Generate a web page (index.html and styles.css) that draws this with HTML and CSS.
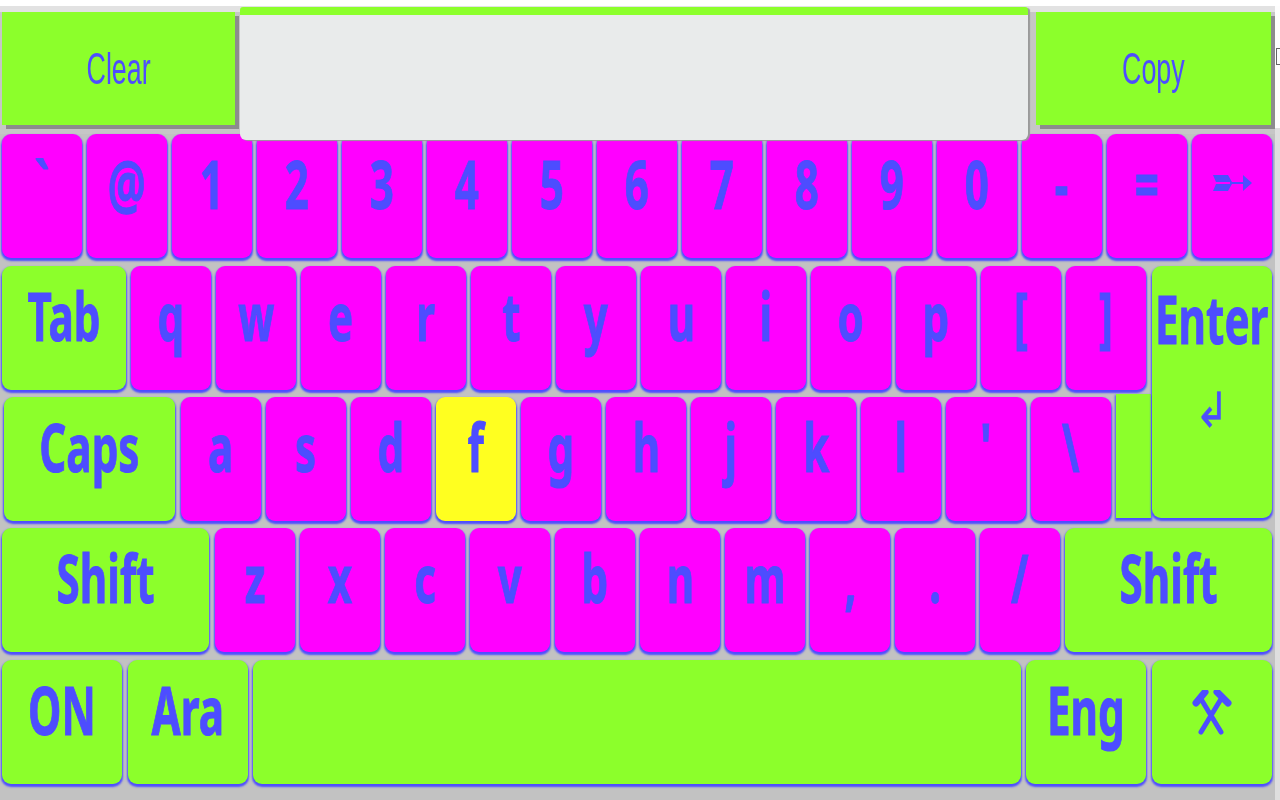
FILE: index.html
```html
<!DOCTYPE html>
<html lang="en">
<head>
<meta charset="utf-8">
<title>Keyboard</title>
<link rel="stylesheet" href="styles.css">
</head>
<body>
<div class="strip"></div>
<main class="kbd">
  <section class="top">
    <button class="tool-btn clear"><span class="thin">Clear</span></button>
    <div class="display"></div>
    <button class="tool-btn copy"><span class="thin">Copy</span></button>
  </section>
  <section class="rows">
    <div class="row">
      <div class="key pink"><span class="t">`</span></div>
      <div class="key pink"><span class="t">@</span></div>
      <div class="key pink"><span class="t">1</span></div>
      <div class="key pink"><span class="t">2</span></div>
      <div class="key pink"><span class="t">3</span></div>
      <div class="key pink"><span class="t">4</span></div>
      <div class="key pink"><span class="t">5</span></div>
      <div class="key pink"><span class="t">6</span></div>
      <div class="key pink"><span class="t">7</span></div>
      <div class="key pink"><span class="t">8</span></div>
      <div class="key pink"><span class="t">9</span></div>
      <div class="key pink"><span class="t">0</span></div>
      <div class="key pink"><span class="t">-</span></div>
      <div class="key pink"><span class="t">=</span></div>
      <div class="key pink">
        <svg class="ico-arrow" viewBox="0 0 39 16" width="39" height="16">
          <path d="M0 0h15l4 7H3zM0 16h15l4-7H3z"/>
          <path d="M17 7h15v2H17z"/>
          <path d="M30 0l9 8-9 8z"/>
        </svg>
      </div>
    </div>
    <div class="mid">
      <div class="mid-left">
        <div class="row">
          <div class="key green w-tab"><span class="t">Tab</span></div>
          <div class="key pink"><span class="t">q</span></div>
          <div class="key pink"><span class="t">w</span></div>
          <div class="key pink"><span class="t">e</span></div>
          <div class="key pink"><span class="t">r</span></div>
          <div class="key pink"><span class="t">t</span></div>
          <div class="key pink"><span class="t">y</span></div>
          <div class="key pink"><span class="t">u</span></div>
          <div class="key pink"><span class="t">i</span></div>
          <div class="key pink"><span class="t">o</span></div>
          <div class="key pink"><span class="t">p</span></div>
          <div class="key pink"><span class="t">[</span></div>
          <div class="key pink"><span class="t">]</span></div>
        </div>
        <div class="row row-caps">
          <div class="key green w-caps"><span class="t">Caps</span></div>
          <div class="key pink"><span class="t">a</span></div>
          <div class="key pink"><span class="t">s</span></div>
          <div class="key pink"><span class="t">d</span></div>
          <div class="key yellow"><span class="t">f</span></div>
          <div class="key pink"><span class="t">g</span></div>
          <div class="key pink"><span class="t">h</span></div>
          <div class="key pink"><span class="t">j</span></div>
          <div class="key pink"><span class="t">k</span></div>
          <div class="key pink"><span class="t">l</span></div>
          <div class="key pink"><span class="t">'</span></div>
          <div class="key pink"><span class="t">\</span></div>
          <div class="key green stub"></div>
        </div>
      </div>
      <div class="key green enter">
        <span class="t">Enter</span>
        <span class="ret">↲</span>
      </div>
    </div>
    <div class="row row-shift">
      <div class="key green w-lshift"><span class="t">Shift</span></div>
      <div class="key pink"><span class="t">z</span></div>
      <div class="key pink"><span class="t">x</span></div>
      <div class="key pink"><span class="t">c</span></div>
      <div class="key pink"><span class="t">v</span></div>
      <div class="key pink"><span class="t">b</span></div>
      <div class="key pink"><span class="t">n</span></div>
      <div class="key pink"><span class="t">m</span></div>
      <div class="key pink"><span class="t">,</span></div>
      <div class="key pink"><span class="t">.</span></div>
      <div class="key pink"><span class="t">/</span></div>
      <div class="key green w-rshift"><span class="t">Shift</span></div>
    </div>
    <div class="row row-bottom">
      <div class="key green w-fn wide-gap"><span class="t">ON</span></div>
      <div class="key green w-fn"><span class="t">Ara</span></div>
      <div class="key green w-space"></div>
      <div class="key green w-fn wide-gap"><span class="t">Eng</span></div>
      <div class="key green w-fn">
        <svg class="ico-tools" viewBox="0 0 40 46" width="40" height="46">
          <path d="M9 42L29 9M29 42L9 9"/>
          <path class="head" d="M25 2L36 13M13 2L4 13"/>
        </svg>
      </div>
    </div>
  </section>
</main>
<div class="peek"></div>
</body>
</html>
```

FILE: styles.css
```css
* { box-sizing: border-box; }

html, body {
  margin: 0;
  height: 100%;
  overflow: hidden;
}

body {
  background: linear-gradient(#fdfdfd 128px, #dedede 128px);
  font-family: "Noto Sans", "Open Sans", sans-serif;
}

.strip {
  height: 6px;
  background: #fff;
}

.kbd {
  width: 1275px;
  height: 794px;
  background: #c2c2c2;
  filter: blur(0.7px);
}

.top {
  display: flex;
  align-items: flex-start;
  height: 128px;
  padding: 6px 0 0 2px;
  background: linear-gradient(#e2e2e2 6px, #c6c6c6 6px);
}

.tool-btn {
  height: 113px;
  border: 0;
  padding: 0;
  background: #8cff2b;
  box-shadow: 4px 4px 0 #8c8c8c;
  display: flex;
  align-items: center;
  justify-content: center;
  color: #4d4dff;
}

.clear { width: 233px; }

.copy {
  width: 235px;
  margin-left: 8px;
}

.display {
  position: relative;
  z-index: 2;
  width: 788px;
  height: 133px;
  margin: -5px 0 0 5px;
  background: #e9ebeb;
  border-top: 8px solid #8cff2b;
  border-radius: 3px 3px 6px 6px;
  box-shadow: 2px 1px 1px #9a9a9a;
}

.thin {
  display: inline-block;
  font: 400 44px/1 "Liberation Sans", Arial, sans-serif;
  transform: scaleX(0.61);
}

.rows {
  display: flex;
  flex-direction: column;
  gap: 7px;
  padding-left: 2px;
}

.row {
  display: flex;
  gap: 5px;
  height: 124px;
}

.mid {
  display: flex;
  gap: 4px;
  margin-top: 1px;
}

.mid-left {
  display: flex;
  flex-direction: column;
  gap: 7px;
  width: 1146px;
}

.key {
  flex: none;
  width: 80px;
  height: 124px;
  border-radius: 9px;
  display: flex;
  align-items: center;
  justify-content: center;
  padding-bottom: 26px;
  color: #4d4dff;
  box-shadow: 0 2px 2px 1px #4d4dff;
}

.pink { background: #ff00ff; }
.green { background: #8cff2b; }
.yellow { background: #ffff20; }

.t {
  display: inline-block;
  font-weight: 700;
  font-size: 66px;
  line-height: 1;
  -webkit-text-stroke: 1px #4d4dff;
  transform: scaleX(0.64);
  white-space: nowrap;
}

.w-tab { width: 124px; }

.row-caps { padding-left: 2px; }
.w-caps { width: 171px; margin-right: 1px; }

.stub {
  width: 35px;
  height: 124px;
  margin-top: -3px;
  border-radius: 0;
}

.enter {
  width: 120px;
  height: 252px;
  flex-direction: column;
  justify-content: flex-start;
  padding: 19px 0 0;
}

.ret {
  margin-top: 35px;
  font: 400 48px/1 "DejaVu Sans", sans-serif;
  -webkit-text-stroke: 0.5px #4d4dff;
  transform: scaleX(0.85);
}

.row-shift .w-lshift { width: 207px; margin-right: 1px; }
.row-shift .w-rshift { width: 207px; }

.row-bottom { margin-top: 1px; }
.w-fn { width: 120px; }
.wide-gap { margin-right: 1px; }
.w-space { width: 768px; }

.ico-arrow { fill: #4d4dff; }

.ico-tools {
  margin-top: 8px;
  fill: none;
  stroke: #4d4dff;
  stroke-width: 5;
  stroke-linecap: round;
}

.ico-tools .head {
  stroke-width: 7;
}

.peek {
  position: absolute;
  left: 1276px;
  top: 48px;
  width: 6px;
  height: 17px;
  border: 1.5px solid #666;
}
```
